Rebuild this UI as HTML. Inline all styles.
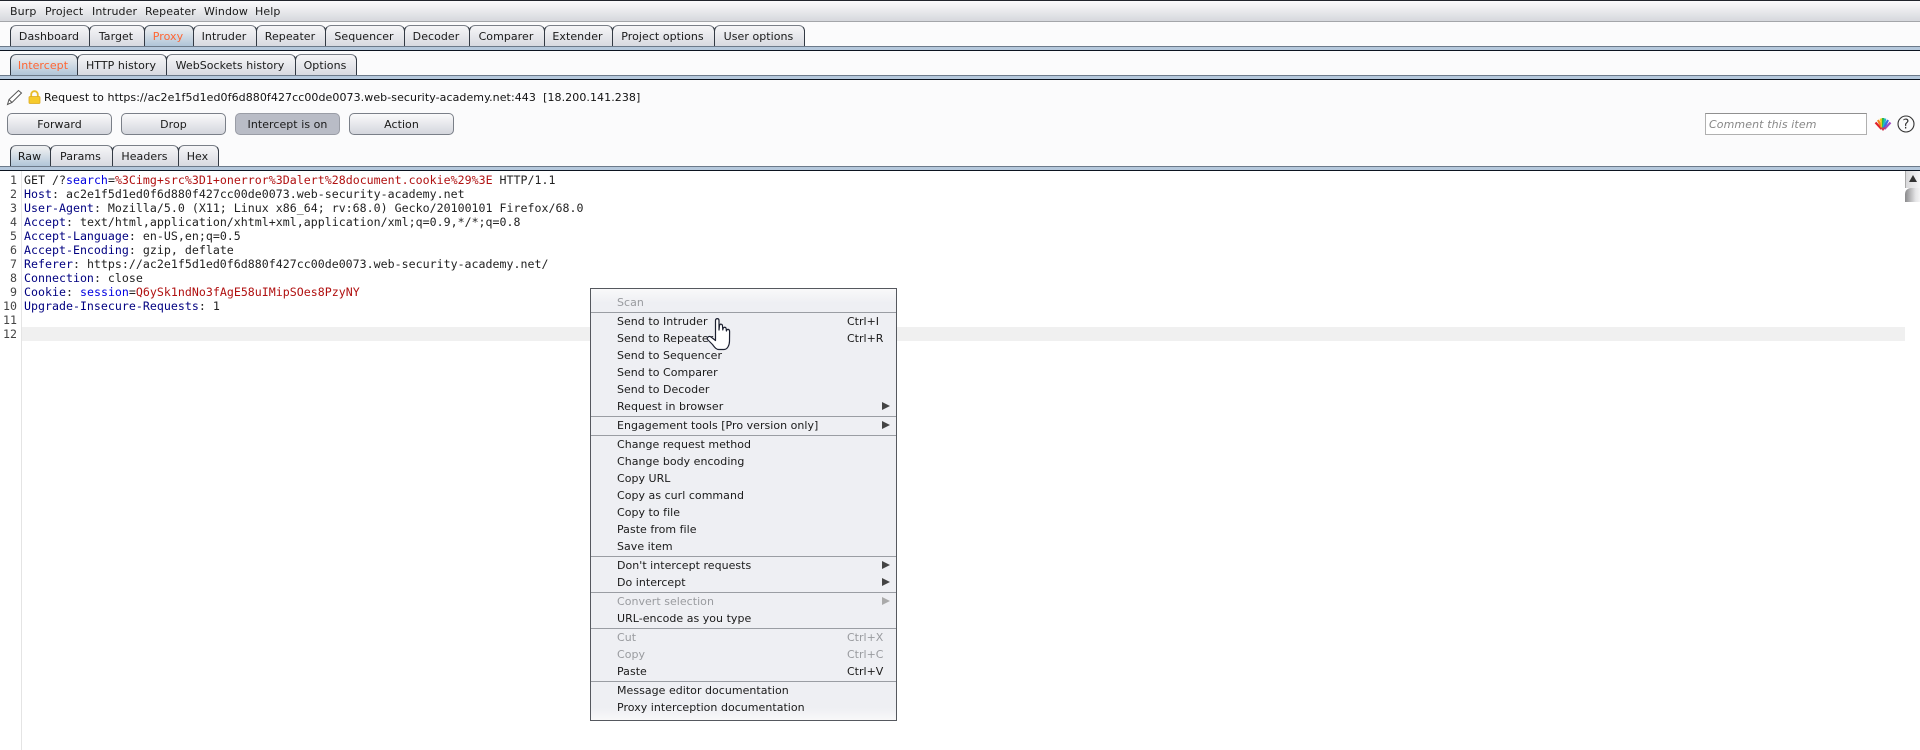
<!DOCTYPE html>
<html><head><meta charset="utf-8"><title>Burp Suite</title>
<style>
html,body{margin:0;padding:0;width:1920px;height:750px;overflow:hidden;background:#fff}
body{position:relative;font-family:"DejaVu Sans","Liberation Sans",sans-serif;font-size:11px;color:#1a1a1a}
.a{position:absolute}
.t{position:absolute;white-space:nowrap;line-height:14px;height:14px}
.tab{position:absolute;box-sizing:border-box;height:22px;border:1px solid #333a44;border-bottom:none;border-radius:6px 6px 0 0;background:linear-gradient(#f6f6f8,#d6d8df);text-align:center;line-height:22px;white-space:nowrap;border-top-color:#7a7f88;letter-spacing:.05px;padding-right:2px}
.tab.s{background:linear-gradient(#e9ebee 10%,#adc3d7);border-top-color:#55606c;color:#ff6633}
.tab.w{background:linear-gradient(#eceef0 10%,#adc3d7);color:#1a1a1a}
.strip{position:absolute;left:0;width:1920px;height:5px;background:#b5c8dc;border-top:1px solid #6c7a8a;border-bottom:1px solid #0c1420;box-sizing:border-box}
.btn{position:absolute;box-sizing:border-box;top:113px;height:22px;width:105px;border:1px solid #7a7f88;border-radius:5px;background:linear-gradient(#fafafb,#d4d6dd);text-align:center;line-height:22px;letter-spacing:.05px}
.btn.on{background:#b9bcc6;border-color:#9a9da6}
#ed{position:absolute;left:0;top:171px;width:1920px;height:579px;background:#fff}
.ln{position:absolute;left:0;width:17px;text-align:right;font:11.6px/14px "DejaVu Sans Mono",monospace;color:#444;height:14px}
.c{position:absolute;left:24px;white-space:pre;font:11.6px/14px "DejaVu Sans Mono","Liberation Mono",monospace;letter-spacing:.013px;color:#222;height:14px}
.n{color:#000080}.b{color:#0000e0}.r{color:#b01010}
#menu{position:absolute;left:590px;top:288px;width:307px;height:433px;box-sizing:border-box;border:1px solid #55585e;background:linear-gradient(#f9f9fa 0,#eeeff3 14px,#eeeff3 calc(100% - 12px),#f8f8f9 100%)}
.mi{position:absolute;left:26px;margin-top:1px;white-space:nowrap;line-height:14px;height:14px;letter-spacing:.03px;color:#1a1a1a}
.ms{position:absolute;left:256px;margin-top:1px;white-space:nowrap;line-height:14px;height:14px;color:#1a1a1a}
.d{color:#999b9f!important}
.sep{position:absolute;left:0;width:305px;height:1px;background:#9a9da3}
.ar{position:absolute;left:291px;width:0;height:0;border-left:8px solid #444;border-top:4px solid transparent;border-bottom:4px solid transparent}
.ar.d2{border-left-color:#aaa}
</style></head><body>
<div class="a" style="left:0;top:0;width:1920px;height:1px;background:#20242c"></div>
<div class="a" style="left:0;top:1px;width:1920px;height:21px;background:linear-gradient(#fbfbfc,#d6d8dd);border-bottom:1px solid #a4a6aa;box-sizing:border-box"></div>
<div class="a" style="left:0;top:22px;width:1920px;height:149px;background:#fbfbfc"></div>
<div class="t" style="left:10px;top:5px;letter-spacing:.1px">Burp</div>
<div class="t" style="left:45px;top:5px;letter-spacing:.1px">Project</div>
<div class="t" style="left:92px;top:5px;letter-spacing:.1px">Intruder</div>
<div class="t" style="left:145px;top:5px;letter-spacing:.1px">Repeater</div>
<div class="t" style="left:204px;top:5px;letter-spacing:.1px">Window</div>
<div class="t" style="left:255px;top:5px;letter-spacing:.1px">Help</div>

<div class="tab" style="left:10px;top:25px;width:80px">Dashboard</div>
<div class="tab" style="left:89px;top:25px;width:56px">Target</div>
<div class="tab s" style="left:144px;top:25px;width:50px">Proxy</div>
<div class="tab" style="left:193px;top:25px;width:64px">Intruder</div>
<div class="tab" style="left:256px;top:25px;width:70px">Repeater</div>
<div class="tab" style="left:325px;top:25px;width:80px">Sequencer</div>
<div class="tab" style="left:404px;top:25px;width:66px">Decoder</div>
<div class="tab" style="left:469px;top:25px;width:76px">Comparer</div>
<div class="tab" style="left:544px;top:25px;width:69px">Extender</div>
<div class="tab" style="left:612px;top:25px;width:103px">Project options</div>
<div class="tab" style="left:714px;top:25px;width:91px">User options</div>
<div class="strip" style="top:46px"></div>

<div class="tab s" style="left:10px;top:54px;width:68px">Intercept</div>
<div class="tab" style="left:77px;top:54px;width:90px">HTTP history</div>
<div class="tab" style="left:166px;top:54px;width:130px">WebSockets history</div>
<div class="tab" style="left:295px;top:54px;width:62px">Options</div>
<div class="strip" style="top:75px"></div>

<svg class="a" style="left:6px;top:89px" width="17" height="17" viewBox="0 0 17 17"><path d="M1.5 15.5 L3 10.5 L12.5 1.5 L15.5 4 L6 13.5 Z M3 10.5 L6 13.5" fill="#fff" stroke="#555" stroke-width="1"/></svg>
<svg class="a" style="left:28px;top:90px" width="13" height="14" viewBox="0 0 13 14"><path d="M3.2 7 V4.5 a3.3 3.3 0 0 1 6.6 0 V7" fill="none" stroke="#e8bc2a" stroke-width="1.8"/><rect x="1" y="6.5" width="11" height="7" rx="1" fill="#f6ca2c" stroke="#dba91e" stroke-width=".8"/></svg>
<div class="t" style="left:44px;top:91px;letter-spacing:.075px;color:#111">Request to https://ac2e1f5d1ed0f6d880f427cc00de0073.web-security-academy.net:443&nbsp; [18.200.141.238]</div>

<div class="btn" style="left:7px">Forward</div>
<div class="btn" style="left:121px">Drop</div>
<div class="btn on" style="left:235px">Intercept is on</div>
<div class="btn" style="left:349px">Action</div>

<div class="a" style="left:1705px;top:113px;width:162px;height:22px;box-sizing:border-box;background:#fff;border:1px solid #b0b0b0;border-top-color:#909090;font-style:italic;color:#888;line-height:22px;padding-left:3px;letter-spacing:.1px">Comment this item</div>
<svg class="a" style="left:1874px;top:117px" width="18" height="15" viewBox="0 0 18 15" fill="none" stroke-width="2.2"><path d="M7.5 12 L1.5 5.5" stroke="#e0202a"/><path d="M8 11 L4 3" stroke="#f2861c"/><path d="M8.5 11 L6.8 1.5" stroke="#f2d21c"/><path d="M9 11 V1" stroke="#2eb84a"/><path d="M9.5 11 L11.2 1.5" stroke="#22b8c8"/><path d="M10 11 L14 3" stroke="#3a6fe0"/><path d="M10.5 12 L16.5 5.5" stroke="#a04cc0"/><path d="M9 14 L6 10.5 H12 Z" fill="#d03a50" stroke="none"/></svg>
<svg class="a" style="left:1897px;top:115px" width="18" height="18" viewBox="0 0 18 18"><circle cx="9" cy="9" r="8" fill="none" stroke="#333" stroke-width="1.1"/><text x="9" y="13.5" text-anchor="middle" font-family="DejaVu Sans" font-size="13" fill="#333">?</text></svg>

<div class="tab w" style="left:10px;top:145px;width:41px">Raw</div>
<div class="tab" style="left:50px;top:145px;width:63px">Params</div>
<div class="tab" style="left:112px;top:145px;width:67px">Headers</div>
<div class="tab" style="left:178px;top:145px;width:41px">Hex</div>
<div class="strip" style="top:166px"></div>

<div id="ed"></div>
<div class="a" style="left:21px;top:171px;width:1px;height:579px;background:#e4e4e4"></div>
<div class="a" style="left:22px;top:327px;width:1883px;height:14px;background:#f0f0f0"></div>

<div class="ln" style="top:173px">1</div><div class="ln" style="top:187px">2</div><div class="ln" style="top:201px">3</div><div class="ln" style="top:215px">4</div><div class="ln" style="top:229px">5</div><div class="ln" style="top:243px">6</div><div class="ln" style="top:257px">7</div><div class="ln" style="top:271px">8</div><div class="ln" style="top:285px">9</div><div class="ln" style="top:299px">10</div><div class="ln" style="top:313px">11</div><div class="ln" style="top:327px">12</div>

<div class="c" style="top:173px">GET /?<span class="b">search</span>=<span class="r">%3Cimg+src%3D1+onerror%3Dalert%28document.cookie%29%3E</span> HTTP/1.1</div>
<div class="c" style="top:187px"><span class="n">Host</span>: ac2e1f5d1ed0f6d880f427cc00de0073.web-security-academy.net</div>
<div class="c" style="top:201px"><span class="n">User-Agent</span>: Mozilla/5.0 (X11; Linux x86_64; rv:68.0) Gecko/20100101 Firefox/68.0</div>
<div class="c" style="top:215px"><span class="n">Accept</span>: text/html,application/xhtml+xml,application/xml;q=0.9,*/*;q=0.8</div>
<div class="c" style="top:229px"><span class="n">Accept-Language</span>: en-US,en;q=0.5</div>
<div class="c" style="top:243px"><span class="n">Accept-Encoding</span>: gzip, deflate</div>
<div class="c" style="top:257px"><span class="n">Referer</span>: https://ac2e1f5d1ed0f6d880f427cc00de0073.web-security-academy.net/</div>
<div class="c" style="top:271px"><span class="n">Connection</span>: close</div>
<div class="c" style="top:285px"><span class="n">Cookie</span>: <span class="b">session</span>=<span class="r">Q6ySk1ndNo3fAgE58uIMipSOes8PzyNY</span></div>
<div class="c" style="top:299px"><span class="n">Upgrade-Insecure-Requests</span>: 1</div>

<div class="a" style="left:1905px;top:171px;width:15px;height:17px;background:linear-gradient(90deg,#d8d8da,#f6f6f7);border-left:1px solid #aaa;box-sizing:border-box"></div>
<div class="a" style="left:1909px;top:175px;width:0;height:0;border-bottom:7px solid #333;border-left:4px solid transparent;border-right:4px solid transparent"></div>
<div class="a" style="left:1905px;top:188px;width:15px;height:14px;background:linear-gradient(90deg,#8a8a8c,#e4e4e6 70%,#f4f4f5);border-radius:6px 0 0 0"></div>

<div id="menu">
<div class="mi d" style="top:6px">Scan</div><div class="sep" style="top:23px"></div>
<div class="mi" style="top:25px">Send to Intruder</div><div class="ms" style="top:25px">Ctrl+I</div>
<div class="mi" style="top:42px">Send to Repeater</div><div class="ms" style="top:42px">Ctrl+R</div>
<div class="mi" style="top:59px">Send to Sequencer</div>
<div class="mi" style="top:76px">Send to Comparer</div>
<div class="mi" style="top:93px">Send to Decoder</div>
<div class="mi" style="top:110px">Request in browser</div><div class="ar" style="top:113px"></div>
<div class="sep" style="top:127px"></div>
<div class="mi" style="top:129px">Engagement tools [Pro version only]</div><div class="ar" style="top:132px"></div>
<div class="sep" style="top:146px"></div>
<div class="mi" style="top:148px">Change request method</div>
<div class="mi" style="top:165px">Change body encoding</div>
<div class="mi" style="top:182px">Copy URL</div>
<div class="mi" style="top:199px">Copy as curl command</div>
<div class="mi" style="top:216px">Copy to file</div>
<div class="mi" style="top:233px">Paste from file</div>
<div class="mi" style="top:250px">Save item</div>
<div class="sep" style="top:267px"></div>
<div class="mi" style="top:269px">Don't intercept requests</div><div class="ar" style="top:272px"></div>
<div class="mi" style="top:286px">Do intercept</div><div class="ar" style="top:289px"></div>
<div class="sep" style="top:303px"></div>
<div class="mi d" style="top:305px">Convert selection</div><div class="ar d2" style="top:308px"></div>
<div class="mi" style="top:322px">URL-encode as you type</div>
<div class="sep" style="top:339px"></div>
<div class="mi d" style="top:341px">Cut</div><div class="ms d" style="top:341px">Ctrl+X</div>
<div class="mi d" style="top:358px">Copy</div><div class="ms d" style="top:358px">Ctrl+C</div>
<div class="mi" style="top:375px">Paste</div><div class="ms" style="top:375px">Ctrl+V</div>
<div class="sep" style="top:392px"></div>
<div class="mi" style="top:394px">Message editor documentation</div>
<div class="mi" style="top:411px">Proxy interception documentation</div>
</div>

<svg class="a" style="left:705px;top:317px" width="30" height="34" viewBox="0 0 28 34"><path d="M9.5 3.5 C9.5 1 13 1 13 3.5 L13 13 L13.5 8.5 C14 6.5 16.5 6.8 16.5 9 L16.8 13 C17 9.5 20 9.5 20.2 12 L20.4 14 C21 11.5 23.6 12 23.6 14.5 L23.5 24 C23.5 28 21.5 32.5 18 32.5 L13 32.5 C10 32.5 8.5 30 6.5 27.5 L1.5 22.5 C0.5 20.5 3 18.5 5 20 L9.5 23.5 Z" fill="#fff" stroke="#1c2030" stroke-width="1.2" stroke-linejoin="round"/></svg>
</body></html>
